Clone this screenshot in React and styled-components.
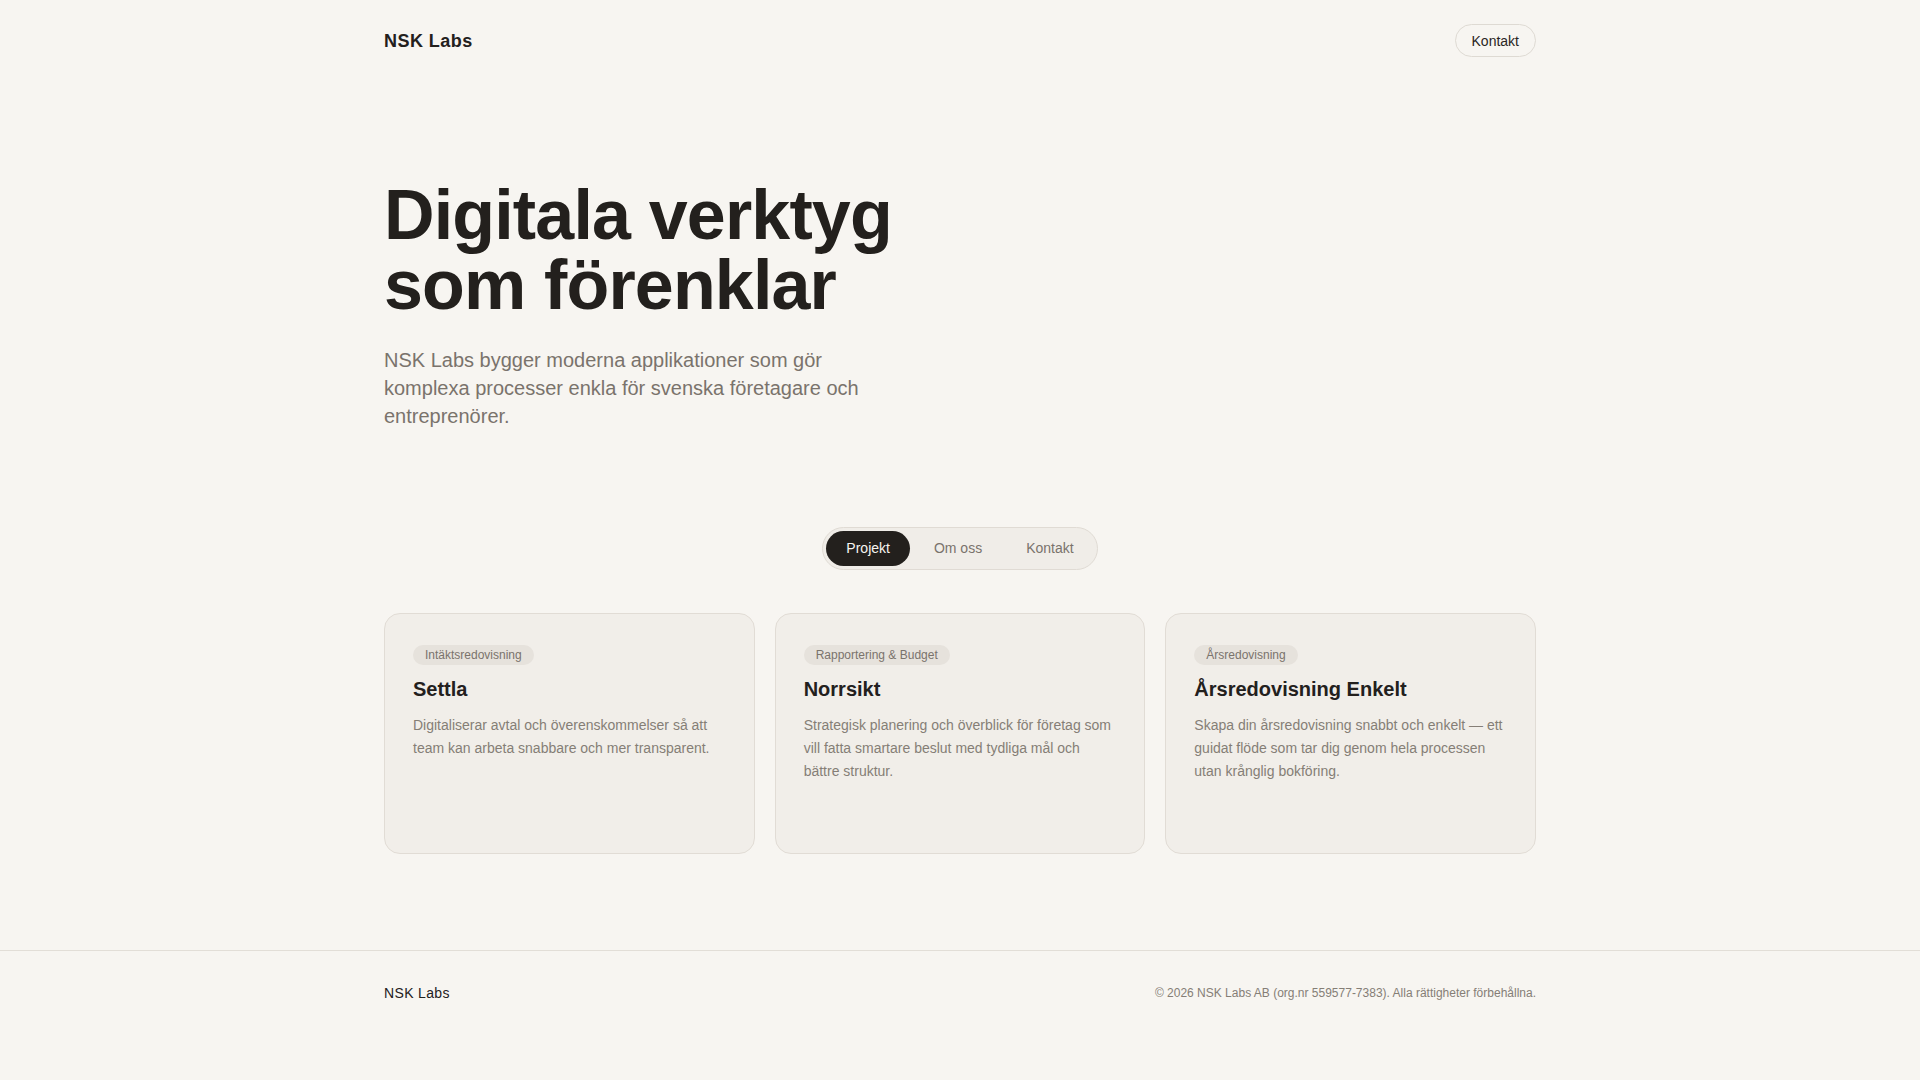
import React from "react";
import styled, { createGlobalStyle } from "styled-components";

const Global = createGlobalStyle`
  * { box-sizing: border-box; }
  html, body { margin: 0; padding: 0; background: #f7f5f1; }
  body {
    font-family: "Liberation Sans", Arial, sans-serif;
    color: #23201d;
    -webkit-font-smoothing: antialiased;
  }
`;

const Page = styled.div`
  min-height: 1080px;
  background: #f7f5f1;
  display: flex;
  flex-direction: column;
`;

const Container = styled.div`
  width: 100%;
  max-width: 1152px;
  margin: 0 auto;
`;

const Header = styled.header`
  padding: 24px 0;
`;

const HeaderRow = styled(Container)`
  display: flex;
  align-items: center;
  justify-content: space-between;
`;

const Logo = styled.div`
  font-size: ${(p) => (p.$small ? "14px" : "18px")};
  font-weight: ${(p) => (p.$small ? 400 : 700)};
  letter-spacing: 0.025em;
  color: #23201d;
  line-height: 20px;
`;

const PillButton = styled.a`
  display: inline-flex;
  align-items: center;
  height: 33px;
  padding: 0 16px;
  border: 1px solid #dedad3;
  border-radius: 999px;
  font-size: 14px;
  color: #2a2623;
  text-decoration: none;
  background: transparent;
`;

const Hero = styled.section`
  padding: 99px 0 97px;
`;

const Title = styled.h1`
  margin: 0;
  font-size: 70px;
  line-height: 1;
  font-weight: 700;
  letter-spacing: -0.012em;
  max-width: 512px;
  color: #23201d;
`;

const Lead = styled.p`
  margin: 26px 0 0;
  max-width: 512px;
  font-size: 20px;
  line-height: 28px;
  color: #7a736c;
`;

const TabsRow = styled.div`
  display: flex;
  justify-content: center;
`;

const Tabs = styled.nav`
  display: inline-flex;
  gap: 4px;
  padding: 3px;
  border: 1px solid #e0dbd4;
  border-radius: 999px;
  background: #f0ede8;
`;

const Tab = styled.button`
  border: none;
  font-family: inherit;
  font-size: 14px;
  line-height: 21px;
  padding: 7px 20px;
  border-radius: 999px;
  cursor: pointer;
  background: ${(p) => (p.$active ? "#23201d" : "transparent")};
  color: ${(p) => (p.$active ? "#f7f5f1" : "#7a736c")};
`;

const Projects = styled.section`
  padding: 43px 0 96px;
`;

const Grid = styled(Container)`
  display: grid;
  grid-template-columns: repeat(3, 1fr);
  gap: 20px;
`;

const Card = styled.article`
  min-height: 241px;
  padding: 31px 28px 28px;
  background: #f1eee9;
  border: 1px solid #e1dcd5;
  border-radius: 16px;
  display: flex;
  flex-direction: column;
  align-items: flex-start;
`;

const Tag = styled.span`
  display: inline-block;
  padding: 2px 12px;
  font-size: 12px;
  line-height: 16px;
  border-radius: 999px;
  background: #e6e2dc;
  color: #7a736c;
`;

const CardTitle = styled.h3`
  margin: 12px 0 0;
  font-size: 20px;
  line-height: 25px;
  font-weight: 700;
  color: #23201d;
`;

const CardText = styled.p`
  margin: 12px 0 0;
  font-size: 14px;
  line-height: 23px;
  color: #857e76;
`;

const Footer = styled.footer`
  border-top: 1px solid #e2ded7;
  padding: 32px 0;
`;

const FooterRow = styled(Container)`
  display: flex;
  align-items: center;
  justify-content: space-between;
`;

const Copy = styled.div`
  font-size: 12px;
  line-height: 20px;
  color: #857e76;
`;

const projects = [
  {
    tag: "Intäktsredovisning",
    title: "Settla",
    text: "Digitaliserar avtal och överenskommelser så att team kan arbeta snabbare och mer transparent.",
  },
  {
    tag: "Rapportering & Budget",
    title: "Norrsikt",
    text: "Strategisk planering och överblick för företag som vill fatta smartare beslut med tydliga mål och bättre struktur.",
  },
  {
    tag: "Årsredovisning",
    title: "Årsredovisning Enkelt",
    text: "Skapa din årsredovisning snabbt och enkelt — ett guidat flöde som tar dig genom hela processen utan krånglig bokföring.",
  },
];

export default function App() {
  return (
    <Page>
      <Global />
      <Header>
        <HeaderRow>
          <Logo>NSK Labs</Logo>
          <PillButton href="#kontakt">Kontakt</PillButton>
        </HeaderRow>
      </Header>

      <Hero>
        <Container>
          <Title>Digitala verktyg som förenklar</Title>
          <Lead>
            NSK Labs bygger moderna applikationer som gör komplexa processer
            enkla för svenska företagare och entreprenörer.
          </Lead>
        </Container>
      </Hero>

      <TabsRow>
        <Tabs>
          <Tab $active>Projekt</Tab>
          <Tab>Om oss</Tab>
          <Tab>Kontakt</Tab>
        </Tabs>
      </TabsRow>

      <Projects>
        <Grid>
          {projects.map((p) => (
            <Card key={p.title}>
              <Tag>{p.tag}</Tag>
              <CardTitle>{p.title}</CardTitle>
              <CardText>{p.text}</CardText>
            </Card>
          ))}
        </Grid>
      </Projects>

      <Footer>
        <FooterRow>
          <Logo $small>NSK Labs</Logo>
          <Copy>© 2026 NSK Labs AB (org.nr 559577-7383). Alla rättigheter förbehållna.</Copy>
        </FooterRow>
      </Footer>
    </Page>
  );
}
